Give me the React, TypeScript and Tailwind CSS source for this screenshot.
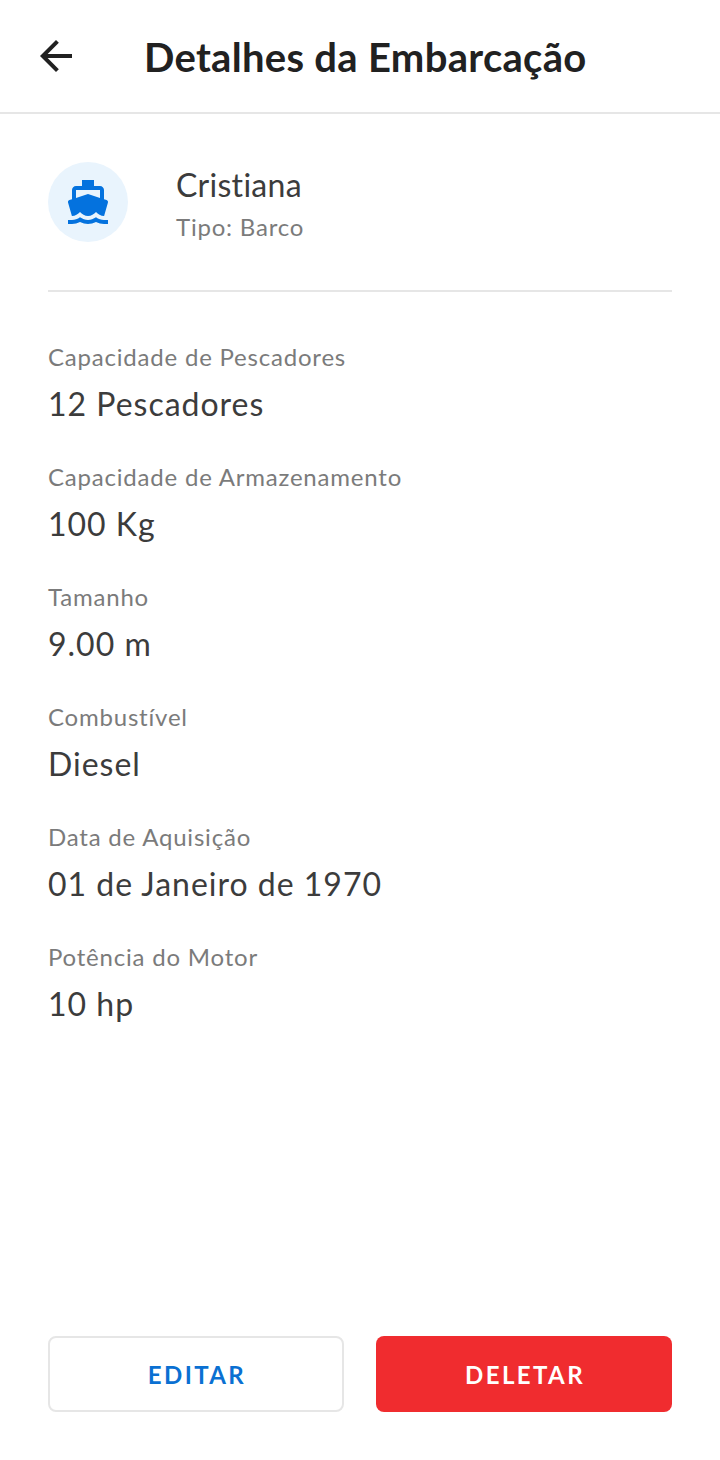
import React from "react";
import { MdArrowBack, MdDirectionsBoat } from "react-icons/md";

const details = [
  { label: "Capacidade de Pescadores", value: "12 Pescadores" },
  { label: "Capacidade de Armazenamento", value: "100 Kg" },
  { label: "Tamanho", value: "9.00 m" },
  { label: "Combustível", value: "Diesel" },
  { label: "Data de Aquisição", value: "01 de Janeiro de 1970" },
  { label: "Potência do Motor", value: "10 hp" },
];

export default function App() {
  return (
    <div className="flex min-h-screen flex-col bg-white font-['Lato',sans-serif] text-[#3c3c3c]">
      <header className="flex h-[114px] items-center border-b-2 border-[#e6e6e6] px-8">
        <button type="button" aria-label="Voltar" className="text-[#212121]">
          <MdArrowBack className="size-12" />
        </button>
        <h1 className="ml-16 pt-0.5 text-[40px] leading-[48px] font-bold tracking-[0.0075em] text-[#212121]">
          Detalhes da Embarcação
        </h1>
      </header>

      <main className="flex flex-1 flex-col px-12 pt-12">
        <section className="flex items-center border-b-2 border-[#e6e6e6] pb-12">
          <div className="flex size-20 items-center justify-center rounded-full bg-[#e9f4fd] text-[#0472de]">
            <MdDirectionsBoat className="size-12" />
          </div>
          <div className="ml-12">
            <h2 className="text-[32px] leading-[46px] tracking-[0.009em]">Cristiana</h2>
            <p className="mt-1 text-2xl leading-[30px] tracking-[0.033em] text-[#7b7b7b]">Tipo: Barco</p>
          </div>
        </section>

        <dl className="flex flex-col gap-8 pt-12">
          {details.map((item) => (
            <div key={item.label}>
              <dt className="text-2xl leading-[34px] tracking-[0.033em] text-[#7b7b7b]">{item.label}</dt>
              <dd className="mt-1.5 text-[32px] leading-[48px] tracking-[0.031em]">{item.value}</dd>
            </div>
          ))}
        </dl>
      </main>

      <footer className="grid grid-cols-2 gap-8 px-12 pb-12">
        <button
          type="button"
          className="h-[76px] rounded-lg border-2 border-[#e6e6e6] pt-0.5 pl-0.5 text-2xl font-bold tracking-widest text-[#0a70d2]"
        >
          EDITAR
        </button>
        <button
          type="button"
          className="h-[76px] rounded-lg bg-[#f02c2f] pt-0.5 pl-0.5 text-2xl font-bold tracking-widest text-white"
        >
          DELETAR
        </button>
      </footer>
    </div>
  );
}
